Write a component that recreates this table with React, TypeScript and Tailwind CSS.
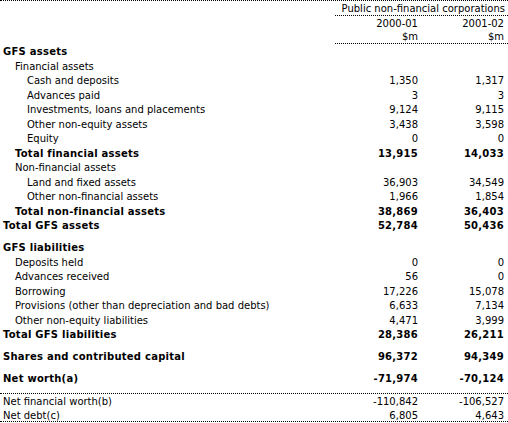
import React from "react";

type Row = {
  label: string;
  level?: number;
  bold?: boolean;
  a?: string;
  b?: string;
  gap?: boolean; // spacer row before
  rule?: boolean; // dotted rule above
  last?: boolean;
};

const rows: Row[] = [
  { label: "GFS assets", bold: true },
  { label: "Financial assets", level: 1 },
  { label: "Cash and deposits", level: 2, a: "1,350", b: "1,317" },
  { label: "Advances paid", level: 2, a: "3", b: "3" },
  { label: "Investments, loans and placements", level: 2, a: "9,124", b: "9,115" },
  { label: "Other non-equity assets", level: 2, a: "3,438", b: "3,598" },
  { label: "Equity", level: 2, a: "0", b: "0" },
  { label: "Total financial assets", level: 1, bold: true, a: "13,915", b: "14,033" },
  { label: "Non-financial assets", level: 1 },
  { label: "Land and fixed assets", level: 2, a: "36,903", b: "34,549" },
  { label: "Other non-financial assets", level: 2, a: "1,966", b: "1,854" },
  { label: "Total non-financial assets", level: 1, bold: true, a: "38,869", b: "36,403" },
  { label: "Total GFS assets", bold: true, a: "52,784", b: "50,436" },
  { label: "GFS liabilities", bold: true, gap: true },
  { label: "Deposits held", level: 1, a: "0", b: "0" },
  { label: "Advances received", level: 1, a: "56", b: "0" },
  { label: "Borrowing", level: 1, a: "17,226", b: "15,078" },
  { label: "Provisions (other than depreciation and bad debts)", level: 1, a: "6,633", b: "7,134" },
  { label: "Other non-equity liabilities", level: 1, a: "4,471", b: "3,999" },
  { label: "Total GFS liabilities", bold: true, a: "28,386", b: "26,211" },
  { label: "Shares and contributed capital", bold: true, gap: true, a: "96,372", b: "94,349" },
  { label: "Net worth(a)", bold: true, gap: true, a: "-71,974", b: "-70,124" },
  { label: "Net financial worth(b)", gap: true, rule: true, a: "-110,842", b: "-106,527" },
  { label: "Net debt(c)", a: "6,805", b: "4,643", last: true },
];

const indent = ["pl-[3px]", "pl-[15px]", "pl-[27px]"];

export default function App() {
  return (
    <div className="w-[508px] h-[423px] bg-white text-black font-['DejaVu_Sans',sans-serif] text-[10px] leading-[13.5px]">
      <div className="border-t border-b border-dotted border-black">
        {/* header: rules only under the figure columns */}
        <div className="grid grid-cols-[335px_173px]">
          <div />
          <div>
            <div className="h-[15px] pt-[1px] border-b border-dotted border-black pr-[3px] text-right whitespace-nowrap">
              Public non-financial corporations
            </div>
            <div className="grid grid-cols-[87px_86px] border-b border-dotted border-black">
              <div className="h-[14px] pt-[1px] pr-[4px] text-right">2000-01</div>
              <div className="h-[14px] pt-[1px] pr-[4px] text-right">2001-02</div>
              <div className="h-[13px] pr-[4px] text-right">$m</div>
              <div className="h-[13px] pr-[4px] text-right">$m</div>
            </div>
          </div>
        </div>

        {rows.map((r, i) => (
          <React.Fragment key={i}>
            {r.gap && <div className="h-[7.5px]" />}
            <div
              className={
                "grid grid-cols-[335px_87px_86px] pt-[1px] " +
                (r.last ? "h-[13.5px] " : "h-[14.5px] ") +
                (r.bold ? "font-bold tracking-[0.25px] " : "") +
                (r.rule ? "border-t border-dotted border-black" : "")
              }
            >
              <div className={"whitespace-nowrap " + indent[r.level ?? 0]}>{r.label}</div>
              <div className="pr-[4px] text-right">{r.a}</div>
              <div className="pr-[4px] text-right">{r.b}</div>
            </div>
          </React.Fragment>
        ))}
      </div>
    </div>
  );
}
